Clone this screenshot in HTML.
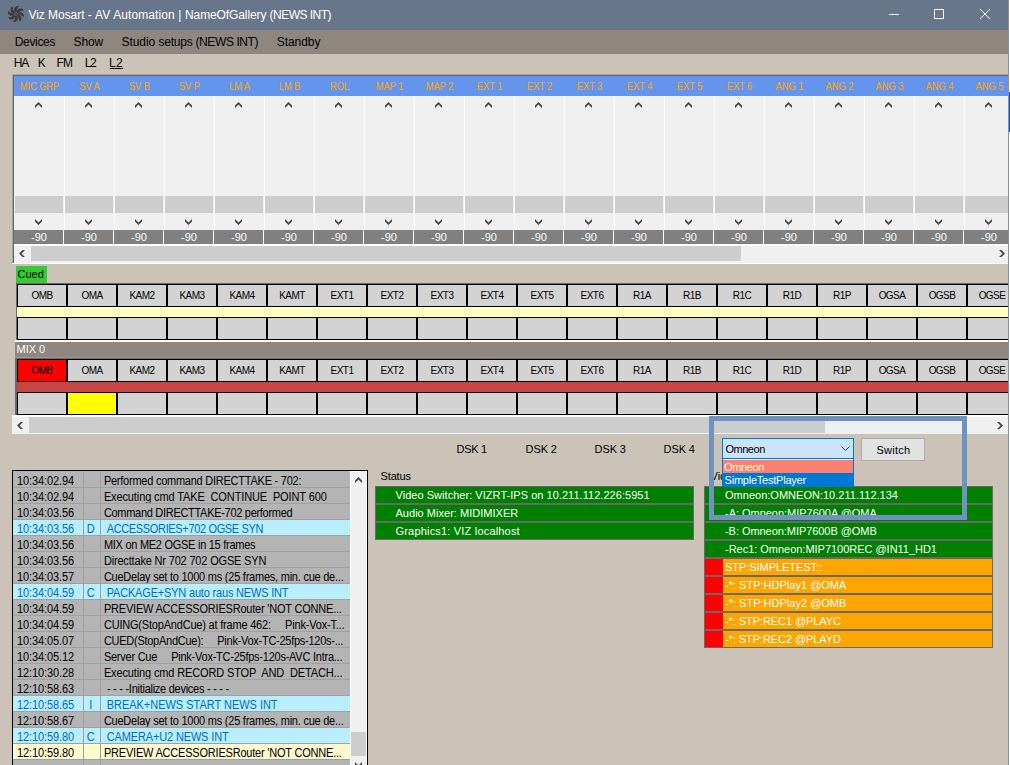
<!DOCTYPE html>
<html><head><meta charset="utf-8"><title>Viz Mosart - AV Automation</title>
<style>
html,body{margin:0;padding:0;}
body{width:1010px;height:765px;overflow:hidden;position:relative;background:#fff;font-family:"Liberation Sans",sans-serif;font-size:11px;color:#000;}
div,span{box-sizing:border-box;}
.win div,.win svg{position:absolute;}
.win{position:absolute;left:0;top:0;width:1008px;height:765px;background:#CBC3B8;overflow:hidden;}
.t{white-space:pre;line-height:1;}
.title{left:0;top:0;width:1008px;height:30px;background:#68768C;}
.menu{left:0;top:30px;width:1008px;height:24px;background:#8E867F;}
.hdr{left:14px;top:76px;width:994px;height:20px;background:#6495ED;}
.hdr .t{color:#FFA500;font-size:10px;letter-spacing:-0.1px;top:6px;padding-left:1px;transform:scaleX(0.94);width:50px;text-align:center;}
.sep{top:96px;width:1px;height:134px;background:#fff;}
.thumb{top:196px;width:48px;height:17px;background:#CDCDCD;}
.db{top:230px;width:49px;height:14px;background:#808080;color:#fff;text-align:center;padding-left:1px;font-size:11px;line-height:14px;}
.cell{width:48px;height:21px;background:#D3D3D3;font-size:10px;letter-spacing:-0.55px;text-align:center;line-height:21px;white-space:pre;}
.lrow{left:13px;width:337px;height:16px;}
.lrow span{position:absolute;top:0;height:15px;line-height:11px;padding-top:4px;white-space:pre;font-size:11px;overflow:hidden;}
.lrow b{font-weight:normal;display:inline-block;transform:scaleY(1.1);transform-origin:0 9.5px;}
.g span{background:#B4B4B4;}
.b span{background:#B9EEFF;color:#0070C0;}
.y span{background:#FFFACD;}
.srow{height:18px;border:1px solid #696969;color:#fff;font-size:11px;line-height:16px;white-space:pre;}
</style></head><body>
<div class="win">

<div class="title">
<svg style="left:7px;top:5px" width="18" height="18" viewBox="-9 -9 18 18">
<path transform="rotate(0)" d="M-0.2,-1.5 C-2.6,-3.2 -2.5,-6.6 1.3,-8.2 L3.2,-7.5 C1.3,-6.2 0.5,-4.2 1.0,-1.9 Z" fill="#3a3c40"/>
<path transform="rotate(45)" d="M-0.2,-1.5 C-2.6,-3.2 -2.5,-6.6 1.3,-8.2 L3.2,-7.5 C1.3,-6.2 0.5,-4.2 1.0,-1.9 Z" fill="#3a3c40"/>
<path transform="rotate(90)" d="M-0.2,-1.5 C-2.6,-3.2 -2.5,-6.6 1.3,-8.2 L3.2,-7.5 C1.3,-6.2 0.5,-4.2 1.0,-1.9 Z" fill="#3a3c40"/>
<path transform="rotate(135)" d="M-0.2,-1.5 C-2.6,-3.2 -2.5,-6.6 1.3,-8.2 L3.2,-7.5 C1.3,-6.2 0.5,-4.2 1.0,-1.9 Z" fill="#3a3c40"/>
<path transform="rotate(180)" d="M-0.2,-1.5 C-2.6,-3.2 -2.5,-6.6 1.3,-8.2 L3.2,-7.5 C1.3,-6.2 0.5,-4.2 1.0,-1.9 Z" fill="#3a3c40"/>
<path transform="rotate(225)" d="M-0.2,-1.5 C-2.6,-3.2 -2.5,-6.6 1.3,-8.2 L3.2,-7.5 C1.3,-6.2 0.5,-4.2 1.0,-1.9 Z" fill="#3a3c40"/>
<path transform="rotate(270)" d="M-0.2,-1.5 C-2.6,-3.2 -2.5,-6.6 1.3,-8.2 L3.2,-7.5 C1.3,-6.2 0.5,-4.2 1.0,-1.9 Z" fill="#3a3c40"/>
<path transform="rotate(315)" d="M-0.2,-1.5 C-2.6,-3.2 -2.5,-6.6 1.3,-8.2 L3.2,-7.5 C1.3,-6.2 0.5,-4.2 1.0,-1.9 Z" fill="#3a3c40"/>
<circle r="1.6" fill="#4c515a"/></svg>
<div class="t" style="left:28.5px;top:9px;font-size:12px;color:#fff;"><span style="letter-spacing:-0.048px">Viz Mosart - </span><span style="letter-spacing:0.107px">AV Automation | </span><span style="letter-spacing:-0.109px">NameOfGallery </span><span style="letter-spacing:-0.517px">(NEWS INT)</span></div>
<svg style="left:880px;top:0" width="128" height="30" viewBox="0 0 128 30" fill="none" stroke="#fff" stroke-width="1"><path d="M9 14.5H19"/><rect x="54.5" y="9.5" width="9" height="9"/><path d="M100 9L110 19M110 9L100 19"/></svg>
</div>
<div class="menu">
<div class="t" style="left:14.7px;top:6px;font-size:12px;letter-spacing:-0.315px;">Devices</div>
<div class="t" style="left:73.6px;top:6px;font-size:12px;letter-spacing:-0.11px;">Show</div>
<div class="t" style="left:276.7px;top:6px;font-size:12px;letter-spacing:-0.041px;">Standby</div>
<div class="t" style="left:121.5px;top:6px;font-size:12px;"><span style="letter-spacing:-0.051px">Studio </span><span style="letter-spacing:-0.243px">setups </span><span style="letter-spacing:-0.406px">(NEWS INT)</span></div>
</div>
<div class="t" style="left:13.75px;top:57px;font-size:12px;letter-spacing:-1.122px;">HA</div>
<div class="t" style="left:37.8px;top:57px;font-size:12px;letter-spacing:0.284px;">K</div>
<div class="t" style="left:56.5px;top:57px;font-size:12px;letter-spacing:-0.828px;">FM</div>
<div class="t" style="left:84.7px;top:57px;font-size:12px;letter-spacing:-1.259px;">L2</div>
<div class="t" style="left:109.1px;top:57px;font-size:12px;letter-spacing:0.341px;">L2</div>
<div style="left:110px;top:68px;width:13px;height:1px;background:#000;"></div>
<div style="left:12px;top:74px;width:996px;height:190px;background:#fff;"></div>
<div style="left:12px;top:74px;width:996px;height:1px;background:#A0A0A0;"></div>
<div style="left:12px;top:74px;width:1px;height:189px;background:#A0A0A0;"></div>
<div style="left:13px;top:75px;width:995px;height:1px;background:#696969;"></div>
<div style="left:13px;top:75px;width:1px;height:188px;background:#696969;"></div>
<div style="left:14px;top:76px;width:994px;height:187px;background:#F0F0F0;"></div>
<div class="hdr">
<div class="t" style="left:0px;">MIC GRP</div>
<div class="t" style="left:50px;">SV A</div>
<div class="t" style="left:100px;">SV B</div>
<div class="t" style="left:150px;">SV P</div>
<div class="t" style="left:200px;">LM A</div>
<div class="t" style="left:250px;">LM B</div>
<div class="t" style="left:300px;">ROL</div>
<div class="t" style="left:350px;">MAP 1</div>
<div class="t" style="left:400px;">MAP 2</div>
<div class="t" style="left:450px;">EXT 1</div>
<div class="t" style="left:500px;">EXT 2</div>
<div class="t" style="left:550px;">EXT 3</div>
<div class="t" style="left:600px;">EXT 4</div>
<div class="t" style="left:650px;">EXT 5</div>
<div class="t" style="left:700px;">EXT 6</div>
<div class="t" style="left:750px;">ANG 1</div>
<div class="t" style="left:800px;">ANG 2</div>
<div class="t" style="left:850px;">ANG 3</div>
<div class="t" style="left:900px;">ANG 4</div>
<div class="t" style="left:950px;">ANG 5</div>
</div>
<div style="left:14px;top:244px;width:994px;height:2px;background:#fff;"></div>
<svg style="left:35px;top:102px" width="7" height="6" viewBox="0 0 7 6"><path d="M3.5 0L7 3.5V6L3.5 2.5L0 6V3.5Z" fill="#454545"/></svg>
<div class="thumb" style="left:15px;"></div>
<svg style="left:35px;top:219px" width="7" height="6" viewBox="0 0 7 6"><path d="M3.5 6L7 2.5V0L3.5 3.5L0 0V2.5Z" fill="#454545"/></svg>
<div style="left:63px;top:230px;width:1px;height:14px;background:#fff;"></div>
<div class="db" style="left:14px;">-90</div>
<div class="sep" style="left:64px;"></div>
<svg style="left:85px;top:102px" width="7" height="6" viewBox="0 0 7 6"><path d="M3.5 0L7 3.5V6L3.5 2.5L0 6V3.5Z" fill="#454545"/></svg>
<div class="thumb" style="left:65px;"></div>
<svg style="left:85px;top:219px" width="7" height="6" viewBox="0 0 7 6"><path d="M3.5 6L7 2.5V0L3.5 3.5L0 0V2.5Z" fill="#454545"/></svg>
<div style="left:113px;top:230px;width:1px;height:14px;background:#fff;"></div>
<div class="db" style="left:64px;">-90</div>
<div class="sep" style="left:114px;"></div>
<svg style="left:135px;top:102px" width="7" height="6" viewBox="0 0 7 6"><path d="M3.5 0L7 3.5V6L3.5 2.5L0 6V3.5Z" fill="#454545"/></svg>
<div class="thumb" style="left:115px;"></div>
<svg style="left:135px;top:219px" width="7" height="6" viewBox="0 0 7 6"><path d="M3.5 6L7 2.5V0L3.5 3.5L0 0V2.5Z" fill="#454545"/></svg>
<div style="left:163px;top:230px;width:1px;height:14px;background:#fff;"></div>
<div class="db" style="left:114px;">-90</div>
<div class="sep" style="left:164px;"></div>
<svg style="left:185px;top:102px" width="7" height="6" viewBox="0 0 7 6"><path d="M3.5 0L7 3.5V6L3.5 2.5L0 6V3.5Z" fill="#454545"/></svg>
<div class="thumb" style="left:165px;"></div>
<svg style="left:185px;top:219px" width="7" height="6" viewBox="0 0 7 6"><path d="M3.5 6L7 2.5V0L3.5 3.5L0 0V2.5Z" fill="#454545"/></svg>
<div style="left:213px;top:230px;width:1px;height:14px;background:#fff;"></div>
<div class="db" style="left:164px;">-90</div>
<div class="sep" style="left:214px;"></div>
<svg style="left:235px;top:102px" width="7" height="6" viewBox="0 0 7 6"><path d="M3.5 0L7 3.5V6L3.5 2.5L0 6V3.5Z" fill="#454545"/></svg>
<div class="thumb" style="left:215px;"></div>
<svg style="left:235px;top:219px" width="7" height="6" viewBox="0 0 7 6"><path d="M3.5 6L7 2.5V0L3.5 3.5L0 0V2.5Z" fill="#454545"/></svg>
<div style="left:263px;top:230px;width:1px;height:14px;background:#fff;"></div>
<div class="db" style="left:214px;">-90</div>
<div class="sep" style="left:264px;"></div>
<svg style="left:285px;top:102px" width="7" height="6" viewBox="0 0 7 6"><path d="M3.5 0L7 3.5V6L3.5 2.5L0 6V3.5Z" fill="#454545"/></svg>
<div class="thumb" style="left:265px;"></div>
<svg style="left:285px;top:219px" width="7" height="6" viewBox="0 0 7 6"><path d="M3.5 6L7 2.5V0L3.5 3.5L0 0V2.5Z" fill="#454545"/></svg>
<div style="left:313px;top:230px;width:1px;height:14px;background:#fff;"></div>
<div class="db" style="left:264px;">-90</div>
<div class="sep" style="left:314px;"></div>
<svg style="left:335px;top:102px" width="7" height="6" viewBox="0 0 7 6"><path d="M3.5 0L7 3.5V6L3.5 2.5L0 6V3.5Z" fill="#454545"/></svg>
<div class="thumb" style="left:315px;"></div>
<svg style="left:335px;top:219px" width="7" height="6" viewBox="0 0 7 6"><path d="M3.5 6L7 2.5V0L3.5 3.5L0 0V2.5Z" fill="#454545"/></svg>
<div style="left:363px;top:230px;width:1px;height:14px;background:#fff;"></div>
<div class="db" style="left:314px;">-90</div>
<div class="sep" style="left:364px;"></div>
<svg style="left:385px;top:102px" width="7" height="6" viewBox="0 0 7 6"><path d="M3.5 0L7 3.5V6L3.5 2.5L0 6V3.5Z" fill="#454545"/></svg>
<div class="thumb" style="left:365px;"></div>
<svg style="left:385px;top:219px" width="7" height="6" viewBox="0 0 7 6"><path d="M3.5 6L7 2.5V0L3.5 3.5L0 0V2.5Z" fill="#454545"/></svg>
<div style="left:413px;top:230px;width:1px;height:14px;background:#fff;"></div>
<div class="db" style="left:364px;">-90</div>
<div class="sep" style="left:414px;"></div>
<svg style="left:435px;top:102px" width="7" height="6" viewBox="0 0 7 6"><path d="M3.5 0L7 3.5V6L3.5 2.5L0 6V3.5Z" fill="#454545"/></svg>
<div class="thumb" style="left:415px;"></div>
<svg style="left:435px;top:219px" width="7" height="6" viewBox="0 0 7 6"><path d="M3.5 6L7 2.5V0L3.5 3.5L0 0V2.5Z" fill="#454545"/></svg>
<div style="left:463px;top:230px;width:1px;height:14px;background:#fff;"></div>
<div class="db" style="left:414px;">-90</div>
<div class="sep" style="left:464px;"></div>
<svg style="left:485px;top:102px" width="7" height="6" viewBox="0 0 7 6"><path d="M3.5 0L7 3.5V6L3.5 2.5L0 6V3.5Z" fill="#454545"/></svg>
<div class="thumb" style="left:465px;"></div>
<svg style="left:485px;top:219px" width="7" height="6" viewBox="0 0 7 6"><path d="M3.5 6L7 2.5V0L3.5 3.5L0 0V2.5Z" fill="#454545"/></svg>
<div style="left:513px;top:230px;width:1px;height:14px;background:#fff;"></div>
<div class="db" style="left:464px;">-90</div>
<div class="sep" style="left:514px;"></div>
<svg style="left:535px;top:102px" width="7" height="6" viewBox="0 0 7 6"><path d="M3.5 0L7 3.5V6L3.5 2.5L0 6V3.5Z" fill="#454545"/></svg>
<div class="thumb" style="left:515px;"></div>
<svg style="left:535px;top:219px" width="7" height="6" viewBox="0 0 7 6"><path d="M3.5 6L7 2.5V0L3.5 3.5L0 0V2.5Z" fill="#454545"/></svg>
<div style="left:563px;top:230px;width:1px;height:14px;background:#fff;"></div>
<div class="db" style="left:514px;">-90</div>
<div class="sep" style="left:564px;"></div>
<svg style="left:585px;top:102px" width="7" height="6" viewBox="0 0 7 6"><path d="M3.5 0L7 3.5V6L3.5 2.5L0 6V3.5Z" fill="#454545"/></svg>
<div class="thumb" style="left:565px;"></div>
<svg style="left:585px;top:219px" width="7" height="6" viewBox="0 0 7 6"><path d="M3.5 6L7 2.5V0L3.5 3.5L0 0V2.5Z" fill="#454545"/></svg>
<div style="left:613px;top:230px;width:1px;height:14px;background:#fff;"></div>
<div class="db" style="left:564px;">-90</div>
<div class="sep" style="left:614px;"></div>
<svg style="left:635px;top:102px" width="7" height="6" viewBox="0 0 7 6"><path d="M3.5 0L7 3.5V6L3.5 2.5L0 6V3.5Z" fill="#454545"/></svg>
<div class="thumb" style="left:615px;"></div>
<svg style="left:635px;top:219px" width="7" height="6" viewBox="0 0 7 6"><path d="M3.5 6L7 2.5V0L3.5 3.5L0 0V2.5Z" fill="#454545"/></svg>
<div style="left:663px;top:230px;width:1px;height:14px;background:#fff;"></div>
<div class="db" style="left:614px;">-90</div>
<div class="sep" style="left:664px;"></div>
<svg style="left:685px;top:102px" width="7" height="6" viewBox="0 0 7 6"><path d="M3.5 0L7 3.5V6L3.5 2.5L0 6V3.5Z" fill="#454545"/></svg>
<div class="thumb" style="left:665px;"></div>
<svg style="left:685px;top:219px" width="7" height="6" viewBox="0 0 7 6"><path d="M3.5 6L7 2.5V0L3.5 3.5L0 0V2.5Z" fill="#454545"/></svg>
<div style="left:713px;top:230px;width:1px;height:14px;background:#fff;"></div>
<div class="db" style="left:664px;">-90</div>
<div class="sep" style="left:714px;"></div>
<svg style="left:735px;top:102px" width="7" height="6" viewBox="0 0 7 6"><path d="M3.5 0L7 3.5V6L3.5 2.5L0 6V3.5Z" fill="#454545"/></svg>
<div class="thumb" style="left:715px;"></div>
<svg style="left:735px;top:219px" width="7" height="6" viewBox="0 0 7 6"><path d="M3.5 6L7 2.5V0L3.5 3.5L0 0V2.5Z" fill="#454545"/></svg>
<div style="left:763px;top:230px;width:1px;height:14px;background:#fff;"></div>
<div class="db" style="left:714px;">-90</div>
<div class="sep" style="left:764px;"></div>
<svg style="left:785px;top:102px" width="7" height="6" viewBox="0 0 7 6"><path d="M3.5 0L7 3.5V6L3.5 2.5L0 6V3.5Z" fill="#454545"/></svg>
<div class="thumb" style="left:765px;"></div>
<svg style="left:785px;top:219px" width="7" height="6" viewBox="0 0 7 6"><path d="M3.5 6L7 2.5V0L3.5 3.5L0 0V2.5Z" fill="#454545"/></svg>
<div style="left:813px;top:230px;width:1px;height:14px;background:#fff;"></div>
<div class="db" style="left:764px;">-90</div>
<div class="sep" style="left:814px;"></div>
<svg style="left:835px;top:102px" width="7" height="6" viewBox="0 0 7 6"><path d="M3.5 0L7 3.5V6L3.5 2.5L0 6V3.5Z" fill="#454545"/></svg>
<div class="thumb" style="left:815px;"></div>
<svg style="left:835px;top:219px" width="7" height="6" viewBox="0 0 7 6"><path d="M3.5 6L7 2.5V0L3.5 3.5L0 0V2.5Z" fill="#454545"/></svg>
<div style="left:863px;top:230px;width:1px;height:14px;background:#fff;"></div>
<div class="db" style="left:814px;">-90</div>
<div class="sep" style="left:864px;"></div>
<svg style="left:885px;top:102px" width="7" height="6" viewBox="0 0 7 6"><path d="M3.5 0L7 3.5V6L3.5 2.5L0 6V3.5Z" fill="#454545"/></svg>
<div class="thumb" style="left:865px;"></div>
<svg style="left:885px;top:219px" width="7" height="6" viewBox="0 0 7 6"><path d="M3.5 6L7 2.5V0L3.5 3.5L0 0V2.5Z" fill="#454545"/></svg>
<div style="left:913px;top:230px;width:1px;height:14px;background:#fff;"></div>
<div class="db" style="left:864px;">-90</div>
<div class="sep" style="left:914px;"></div>
<svg style="left:935px;top:102px" width="7" height="6" viewBox="0 0 7 6"><path d="M3.5 0L7 3.5V6L3.5 2.5L0 6V3.5Z" fill="#454545"/></svg>
<div class="thumb" style="left:915px;"></div>
<svg style="left:935px;top:219px" width="7" height="6" viewBox="0 0 7 6"><path d="M3.5 6L7 2.5V0L3.5 3.5L0 0V2.5Z" fill="#454545"/></svg>
<div style="left:963px;top:230px;width:1px;height:14px;background:#fff;"></div>
<div class="db" style="left:914px;">-90</div>
<div class="sep" style="left:964px;"></div>
<svg style="left:985px;top:102px" width="7" height="6" viewBox="0 0 7 6"><path d="M3.5 0L7 3.5V6L3.5 2.5L0 6V3.5Z" fill="#454545"/></svg>
<div class="thumb" style="left:965px;"></div>
<svg style="left:985px;top:219px" width="7" height="6" viewBox="0 0 7 6"><path d="M3.5 6L7 2.5V0L3.5 3.5L0 0V2.5Z" fill="#454545"/></svg>
<div style="left:1013px;top:230px;width:1px;height:14px;background:#fff;"></div>
<div class="db" style="left:964px;">-90</div>
<div style="left:31px;top:246px;width:710px;height:15px;background:#CDCDCD;"></div>
<svg style="left:19px;top:250px" width="6" height="7" viewBox="0 0 6 7"><path d="M0 3.5L3.5 0H6L2.5 3.5L6 7H3.5Z" fill="#454545"/></svg>
<svg style="left:999px;top:250px" width="6" height="7" viewBox="0 0 6 7"><path d="M6 3.5L2.5 0H0L3.5 3.5L0 7H2.5Z" fill="#454545"/></svg>
<div style="left:16px;top:266px;width:31px;height:17px;background:#32CD32;"></div>
<div class="t" style="left:17.4px;top:269px;font-size:11px;letter-spacing:0.068px;">Cued</div>
<div style="left:16px;top:283px;width:992px;height:57px;background:#000;"></div>
<div style="left:16px;top:283px;width:1px;height:57px;background:#696969;"></div>
<div style="left:16px;top:283px;width:992px;height:1px;background:#696969;"></div>
<div style="left:17px;top:307px;width:991px;height:10px;background:#FFFFC0;"></div>
<div class="cell" style="left:18px;top:285px;">OMB</div>
<div class="cell" style="left:18px;top:318px;"></div>
<div class="cell" style="left:68px;top:285px;">OMA</div>
<div class="cell" style="left:68px;top:318px;"></div>
<div class="cell" style="left:118px;top:285px;">KAM2</div>
<div class="cell" style="left:118px;top:318px;"></div>
<div class="cell" style="left:168px;top:285px;">KAM3</div>
<div class="cell" style="left:168px;top:318px;"></div>
<div class="cell" style="left:218px;top:285px;">KAM4</div>
<div class="cell" style="left:218px;top:318px;"></div>
<div class="cell" style="left:268px;top:285px;">KAMT</div>
<div class="cell" style="left:268px;top:318px;"></div>
<div class="cell" style="left:318px;top:285px;">EXT1</div>
<div class="cell" style="left:318px;top:318px;"></div>
<div class="cell" style="left:368px;top:285px;">EXT2</div>
<div class="cell" style="left:368px;top:318px;"></div>
<div class="cell" style="left:418px;top:285px;">EXT3</div>
<div class="cell" style="left:418px;top:318px;"></div>
<div class="cell" style="left:468px;top:285px;">EXT4</div>
<div class="cell" style="left:468px;top:318px;"></div>
<div class="cell" style="left:518px;top:285px;">EXT5</div>
<div class="cell" style="left:518px;top:318px;"></div>
<div class="cell" style="left:568px;top:285px;">EXT6</div>
<div class="cell" style="left:568px;top:318px;"></div>
<div class="cell" style="left:618px;top:285px;">R1A</div>
<div class="cell" style="left:618px;top:318px;"></div>
<div class="cell" style="left:668px;top:285px;">R1B</div>
<div class="cell" style="left:668px;top:318px;"></div>
<div class="cell" style="left:718px;top:285px;">R1C</div>
<div class="cell" style="left:718px;top:318px;"></div>
<div class="cell" style="left:768px;top:285px;">R1D</div>
<div class="cell" style="left:768px;top:318px;"></div>
<div class="cell" style="left:818px;top:285px;">R1P</div>
<div class="cell" style="left:818px;top:318px;"></div>
<div class="cell" style="left:868px;top:285px;">OGSA</div>
<div class="cell" style="left:868px;top:318px;"></div>
<div class="cell" style="left:918px;top:285px;">OGSB</div>
<div class="cell" style="left:918px;top:318px;"></div>
<div class="cell" style="left:968px;top:285px;">OGSE</div>
<div class="cell" style="left:968px;top:318px;"></div>
<div style="left:15px;top:340px;width:993px;height:2px;background:#fff;"></div>
<div style="left:15px;top:342px;width:993px;height:16px;background:#8E867F;"></div>
<div style="left:15px;top:357px;width:993px;height:1px;background:#A09890;"></div>
<div style="left:15px;top:358px;width:1px;height:57px;background:#696969;"></div>
<div class="t" style="left:16.6px;top:344px;font-size:11px;letter-spacing:-0.059px;color:#fff;">MIX 0</div>
<div style="left:16px;top:358px;width:992px;height:57px;background:#000;"></div>
<div style="left:16px;top:358px;width:1px;height:57px;background:#696969;"></div>
<div style="left:16px;top:358px;width:992px;height:1px;background:#696969;"></div>
<div style="left:17px;top:382px;width:991px;height:10px;background:#C64646;"></div>
<div class="cell" style="left:18px;top:360px;background:#FF0000;">OMB</div>
<div class="cell" style="left:18px;top:393px;"></div>
<div class="cell" style="left:68px;top:360px;">OMA</div>
<div class="cell" style="left:68px;top:393px;background:#FFFF00;"></div>
<div class="cell" style="left:118px;top:360px;">KAM2</div>
<div class="cell" style="left:118px;top:393px;"></div>
<div class="cell" style="left:168px;top:360px;">KAM3</div>
<div class="cell" style="left:168px;top:393px;"></div>
<div class="cell" style="left:218px;top:360px;">KAM4</div>
<div class="cell" style="left:218px;top:393px;"></div>
<div class="cell" style="left:268px;top:360px;">KAMT</div>
<div class="cell" style="left:268px;top:393px;"></div>
<div class="cell" style="left:318px;top:360px;">EXT1</div>
<div class="cell" style="left:318px;top:393px;"></div>
<div class="cell" style="left:368px;top:360px;">EXT2</div>
<div class="cell" style="left:368px;top:393px;"></div>
<div class="cell" style="left:418px;top:360px;">EXT3</div>
<div class="cell" style="left:418px;top:393px;"></div>
<div class="cell" style="left:468px;top:360px;">EXT4</div>
<div class="cell" style="left:468px;top:393px;"></div>
<div class="cell" style="left:518px;top:360px;">EXT5</div>
<div class="cell" style="left:518px;top:393px;"></div>
<div class="cell" style="left:568px;top:360px;">EXT6</div>
<div class="cell" style="left:568px;top:393px;"></div>
<div class="cell" style="left:618px;top:360px;">R1A</div>
<div class="cell" style="left:618px;top:393px;"></div>
<div class="cell" style="left:668px;top:360px;">R1B</div>
<div class="cell" style="left:668px;top:393px;"></div>
<div class="cell" style="left:718px;top:360px;">R1C</div>
<div class="cell" style="left:718px;top:393px;"></div>
<div class="cell" style="left:768px;top:360px;">R1D</div>
<div class="cell" style="left:768px;top:393px;"></div>
<div class="cell" style="left:818px;top:360px;">R1P</div>
<div class="cell" style="left:818px;top:393px;"></div>
<div class="cell" style="left:868px;top:360px;">OGSA</div>
<div class="cell" style="left:868px;top:393px;"></div>
<div class="cell" style="left:918px;top:360px;">OGSB</div>
<div class="cell" style="left:918px;top:393px;"></div>
<div class="cell" style="left:968px;top:360px;">OGSE</div>
<div class="cell" style="left:968px;top:393px;"></div>
<div style="left:12px;top:415px;width:996px;height:19px;background:#F0F0F0;"></div>
<div style="left:14px;top:415px;width:994px;height:2px;background:#fff;"></div>
<div style="left:29px;top:417px;width:796px;height:16px;background:#CDCDCD;"></div>
<svg style="left:17px;top:422px" width="6" height="7" viewBox="0 0 6 7"><path d="M0 3.5L3.5 0H6L2.5 3.5L6 7H3.5Z" fill="#454545"/></svg>
<svg style="left:997px;top:422px" width="6" height="7" viewBox="0 0 6 7"><path d="M6 3.5L2.5 0H0L3.5 3.5L0 7H2.5Z" fill="#454545"/></svg>
<div class="t" style="left:456.5px;top:443.5px;font-size:11px;letter-spacing:-0.274px;">DSK 1</div>
<div class="t" style="left:525.6px;top:443.5px;font-size:11px;letter-spacing:-0.124px;">DSK 2</div>
<div class="t" style="left:594.6px;top:443.5px;font-size:11px;letter-spacing:-0.124px;">DSK 3</div>
<div class="t" style="left:663.6px;top:443.5px;font-size:11px;letter-spacing:-0.099px;">DSK 4</div>
<div style="left:12px;top:470px;width:356px;height:300px;background:#000;"></div>
<div style="left:13px;top:471px;width:337px;height:300px;background:#A0A0A0;"></div>
<div style="left:13px;top:471px;width:337px;height:1px;background:#B4B4B4;"></div>
<div class="lrow g" style="top:472px;"><span style="left:0;width:70px;padding-left:4px;letter-spacing:-0.102px;"><b>10:34:02.94</b></span><span style="left:71px;width:16px;text-align:center;padding-right:2.5px;"><b></b></span><span style="left:88px;width:249px;letter-spacing:-0.242px;padding-left:2.9px;"><b>Performed command DIRECTTAKE - 702:</b></span></div>
<div class="lrow g" style="top:488px;"><span style="left:0;width:70px;padding-left:4px;letter-spacing:-0.102px;"><b>10:34:02.94</b></span><span style="left:71px;width:16px;text-align:center;padding-right:2.5px;"><b></b></span><span style="left:88px;width:249px;letter-spacing:-0.119px;padding-left:2.9px;"><b>Executing cmd TAKE  CONTINUE  POINT 600</b></span></div>
<div class="lrow g" style="top:504px;"><span style="left:0;width:70px;padding-left:4px;letter-spacing:-0.102px;"><b>10:34:03.56</b></span><span style="left:71px;width:16px;text-align:center;padding-right:2.5px;"><b></b></span><span style="left:88px;width:249px;letter-spacing:-0.296px;padding-left:2.9px;"><b>Command DIRECTTAKE-702 performed</b></span></div>
<div class="lrow b" style="top:520px;"><span style="left:0;width:70px;padding-left:4px;letter-spacing:-0.102px;"><b>10:34:03.56</b></span><span style="left:71px;width:16px;text-align:center;padding-right:2.5px;"><b>D</b></span><span style="left:88px;width:249px;letter-spacing:-0.346px;padding-left:5.7px;"><b>ACCESSORIES+702 OGSE SYN</b></span></div>
<div class="lrow g" style="top:536px;"><span style="left:0;width:70px;padding-left:4px;letter-spacing:-0.102px;"><b>10:34:03.56</b></span><span style="left:71px;width:16px;text-align:center;padding-right:2.5px;"><b></b></span><span style="left:88px;width:249px;letter-spacing:-0.272px;padding-left:2.9px;"><b>MIX on ME2 OGSE in 15 frames</b></span></div>
<div class="lrow g" style="top:552px;"><span style="left:0;width:70px;padding-left:4px;letter-spacing:-0.102px;"><b>10:34:03.56</b></span><span style="left:71px;width:16px;text-align:center;padding-right:2.5px;"><b></b></span><span style="left:88px;width:249px;letter-spacing:-0.173px;padding-left:2.9px;"><b>Directtake Nr 702 702 OGSE SYN</b></span></div>
<div class="lrow g" style="top:568px;"><span style="left:0;width:70px;padding-left:4px;letter-spacing:-0.102px;"><b>10:34:03.57</b></span><span style="left:71px;width:16px;text-align:center;padding-right:2.5px;"><b></b></span><span style="left:88px;width:249px;letter-spacing:-0.234px;padding-left:2.9px;"><b>CueDelay set to 1000 ms (25 frames, min. cue de...</b></span></div>
<div class="lrow b" style="top:584px;"><span style="left:0;width:70px;padding-left:4px;letter-spacing:-0.102px;"><b>10:34:04.59</b></span><span style="left:71px;width:16px;text-align:center;padding-right:2.5px;"><b>C</b></span><span style="left:88px;width:249px;letter-spacing:-0.182px;padding-left:5.7px;"><b>PACKAGE+SYN auto raus NEWS INT</b></span></div>
<div class="lrow g" style="top:600px;"><span style="left:0;width:70px;padding-left:4px;letter-spacing:-0.102px;"><b>10:34:04.59</b></span><span style="left:71px;width:16px;text-align:center;padding-right:2.5px;"><b></b></span><span style="left:88px;width:249px;letter-spacing:-0.205px;padding-left:2.9px;"><b>PREVIEW ACCESSORIESRouter 'NOT CONNE...</b></span></div>
<div class="lrow g" style="top:616px;"><span style="left:0;width:70px;padding-left:4px;letter-spacing:-0.102px;"><b>10:34:04.59</b></span><span style="left:71px;width:16px;text-align:center;padding-right:2.5px;"><b></b></span><span style="left:88px;width:249px;letter-spacing:-0.197px;padding-left:2.9px;"><b>CUING(StopAndCue) at frame 462:     Pink-Vox-T...</b></span></div>
<div class="lrow g" style="top:632px;"><span style="left:0;width:70px;padding-left:4px;letter-spacing:-0.102px;"><b>10:34:05.07</b></span><span style="left:71px;width:16px;text-align:center;padding-right:2.5px;"><b></b></span><span style="left:88px;width:249px;letter-spacing:-0.265px;padding-left:2.9px;"><b>CUED(StopAndCue):     Pink-Vox-TC-25fps-120s-...</b></span></div>
<div class="lrow g" style="top:648px;"><span style="left:0;width:70px;padding-left:4px;letter-spacing:-0.102px;"><b>10:34:05.12</b></span><span style="left:71px;width:16px;text-align:center;padding-right:2.5px;"><b></b></span><span style="left:88px;width:249px;letter-spacing:-0.242px;padding-left:2.9px;"><b>Server Cue     Pink-Vox-TC-25fps-120s-AVC Intra...</b></span></div>
<div class="lrow g" style="top:664px;"><span style="left:0;width:70px;padding-left:4px;letter-spacing:-0.102px;"><b>12:10:30.28</b></span><span style="left:71px;width:16px;text-align:center;padding-right:2.5px;"><b></b></span><span style="left:88px;width:249px;letter-spacing:-0.133px;padding-left:2.9px;"><b>Executing cmd RECORD STOP  AND  DETACH...</b></span></div>
<div class="lrow g" style="top:680px;"><span style="left:0;width:70px;padding-left:4px;letter-spacing:-0.102px;"><b>12:10:58.63</b></span><span style="left:71px;width:16px;text-align:center;padding-right:2.5px;"><b></b></span><span style="left:88px;width:249px;letter-spacing:-0.266px;padding-left:5.9px;"><b>- - - -Initialize devices - - - -</b></span></div>
<div class="lrow b" style="top:696px;"><span style="left:0;width:70px;padding-left:4px;letter-spacing:-0.102px;"><b>12:10:58.65</b></span><span style="left:71px;width:16px;text-align:center;padding-right:2.5px;"><b>I</b></span><span style="left:88px;width:249px;letter-spacing:-0.023px;padding-left:5.7px;"><b>BREAK+NEWS START NEWS INT</b></span></div>
<div class="lrow g" style="top:712px;"><span style="left:0;width:70px;padding-left:4px;letter-spacing:-0.102px;"><b>12:10:58.67</b></span><span style="left:71px;width:16px;text-align:center;padding-right:2.5px;"><b></b></span><span style="left:88px;width:249px;letter-spacing:-0.234px;padding-left:2.9px;"><b>CueDelay set to 1000 ms (25 frames, min. cue de...</b></span></div>
<div class="lrow b" style="top:728px;"><span style="left:0;width:70px;padding-left:4px;letter-spacing:-0.102px;"><b>12:10:59.80</b></span><span style="left:71px;width:16px;text-align:center;padding-right:2.5px;"><b>C</b></span><span style="left:88px;width:249px;letter-spacing:-0.141px;padding-left:5.7px;"><b>CAMERA+U2 NEWS INT</b></span></div>
<div class="lrow y" style="top:744px;"><span style="left:0;width:70px;padding-left:4px;letter-spacing:-0.102px;"><b>12:10:59.80</b></span><span style="left:71px;width:16px;text-align:center;padding-right:2.5px;"><b></b></span><span style="left:88px;width:249px;letter-spacing:-0.205px;padding-left:2.9px;"><b>PREVIEW ACCESSORIESRouter 'NOT CONNE...</b></span></div>
<div class="lrow g" style="top:760px;"><span style="left:0;width:70px;padding-left:4px;"><b></b></span><span style="left:71px;width:16px;text-align:center;padding-right:2.5px;"><b></b></span><span style="left:88px;width:249px;"><b></b></span></div>
<div style="left:350px;top:471px;width:17px;height:300px;background:#fff;"></div>
<div style="left:351px;top:472px;width:15px;height:300px;background:#F0F0F0;"></div>
<div style="left:351px;top:732px;width:15px;height:24px;background:#CDCDCD;"></div>
<svg style="left:355px;top:477px" width="7" height="6" viewBox="0 0 7 6"><path d="M3.5 0L7 3.5V6L3.5 2.5L0 6V3.5Z" fill="#454545"/></svg>
<svg style="left:355px;top:762px" width="7" height="6" viewBox="0 0 7 6"><path d="M3.5 6L7 2.5V0L3.5 3.5L0 0V2.5Z" fill="#454545"/></svg>
<div class="t" style="left:380.6px;top:471.4px;font-size:11px;letter-spacing:-0.177px;">Status</div>
<div class="srow" style="left:375px;top:486px;width:319px;background:#008000;padding-left:19.5px;letter-spacing:0.037px;">Video Switcher: VIZRT-IPS on 10.211.112.226:5951</div>
<div class="srow" style="left:375px;top:504px;width:319px;background:#008000;padding-left:19.5px;letter-spacing:0.026px;">Audio Mixer: MIDIMIXER</div>
<div class="srow" style="left:375px;top:522px;width:319px;background:#008000;padding-left:19.5px;letter-spacing:0.189px;">Graphics1: VIZ localhost</div>
<div class="t" style="left:710.5px;top:471.4px;font-size:11px;">Video servers</div>
<div class="srow" style="left:704px;top:486px;width:289px;background:#008000;padding-left:20px;letter-spacing:0.013px;">Omneon:OMNEON:10.211.112.134</div>
<div class="srow" style="left:704px;top:504px;width:289px;background:#008000;padding-left:20px;letter-spacing:-0.026px;">-A: Omneon:MIP7600A @OMA</div>
<div class="srow" style="left:704px;top:522px;width:289px;background:#008000;padding-left:20px;letter-spacing:-0.053px;">-B: Omneon:MIP7600B @OMB</div>
<div class="srow" style="left:704px;top:540px;width:289px;background:#008000;padding-left:20px;letter-spacing:-0.022px;">-Rec1: Omneon:MIP7100REC @IN11_HD1</div>
<div class="srow" style="left:704px;top:558px;width:289px;background:#FFA500;padding-left:20px;letter-spacing:-0.054px;">STP:SIMPLETEST::</div>
<div style="left:705px;top:559px;width:18px;height:16px;background:#FF0000;"></div>
<div class="srow" style="left:704px;top:576px;width:289px;background:#FFA500;padding-left:20px;letter-spacing:0.01px;">-*: STP:HDPlay1 @OMA</div>
<div style="left:705px;top:577px;width:18px;height:16px;background:#FF0000;"></div>
<div class="srow" style="left:704px;top:594px;width:289px;background:#FFA500;padding-left:20px;letter-spacing:0.01px;">-*: STP:HDPlay2 @OMB</div>
<div style="left:705px;top:595px;width:18px;height:16px;background:#FF0000;"></div>
<div class="srow" style="left:704px;top:612px;width:289px;background:#FFA500;padding-left:20px;letter-spacing:-0.074px;">-*: STP:REC1 @PLAYC</div>
<div style="left:705px;top:613px;width:18px;height:16px;background:#FF0000;"></div>
<div class="srow" style="left:704px;top:630px;width:289px;background:#FFA500;padding-left:20px;letter-spacing:-0.074px;">-*: STP:REC2 @PLAYD</div>
<div style="left:705px;top:631px;width:18px;height:16px;background:#FF0000;"></div>
<div style="left:722px;top:438px;width:132px;height:21px;background:#CCE4F7;border:1px solid #0078D7;"></div>
<div class="t" style="left:725.4px;top:444px;font-size:11px;letter-spacing:-0.461px;">Omneon</div>
<svg style="left:841px;top:446px" width="9" height="6" viewBox="0 0 9 6"><path d="M0.5 0.5L4.5 4.5L8.5 0.5" fill="none" stroke="#404040" stroke-width="1"/></svg>
<div style="left:722px;top:459px;width:132px;height:28px;background:#0078D7;"></div>
<div style="left:723px;top:459px;width:130px;height:1px;background:#E5F1FB;"></div>
<div style="left:723px;top:460px;width:130px;height:13px;background:#FA8072;"></div>
<div class="t" style="left:723.9px;top:462px;font-size:11px;letter-spacing:-0.321px;color:#FFFFD8;">Omneon</div>
<div class="t" style="left:724.6px;top:474.7px;font-size:11px;letter-spacing:-0.232px;color:#fff;">SimpleTestPlayer</div>
<div style="left:861px;top:438px;width:64px;height:23px;background:#E1E1E1;border:1px solid #ADADAD;"></div>
<div class="t" style="left:876.5px;top:444.5px;font-size:11px;letter-spacing:0.259px;">Switch</div>
<div style="left:709px;top:416px;width:258px;height:104px;border:5px solid #7092BE;"></div>
</div>
<div style="position:absolute;left:1008px;top:0;width:1px;height:765px;background:#8793A8;"></div>
<div style="position:absolute;left:1009px;top:92px;width:1px;height:40px;background:#1E4FA8;"></div>
</body></html>
